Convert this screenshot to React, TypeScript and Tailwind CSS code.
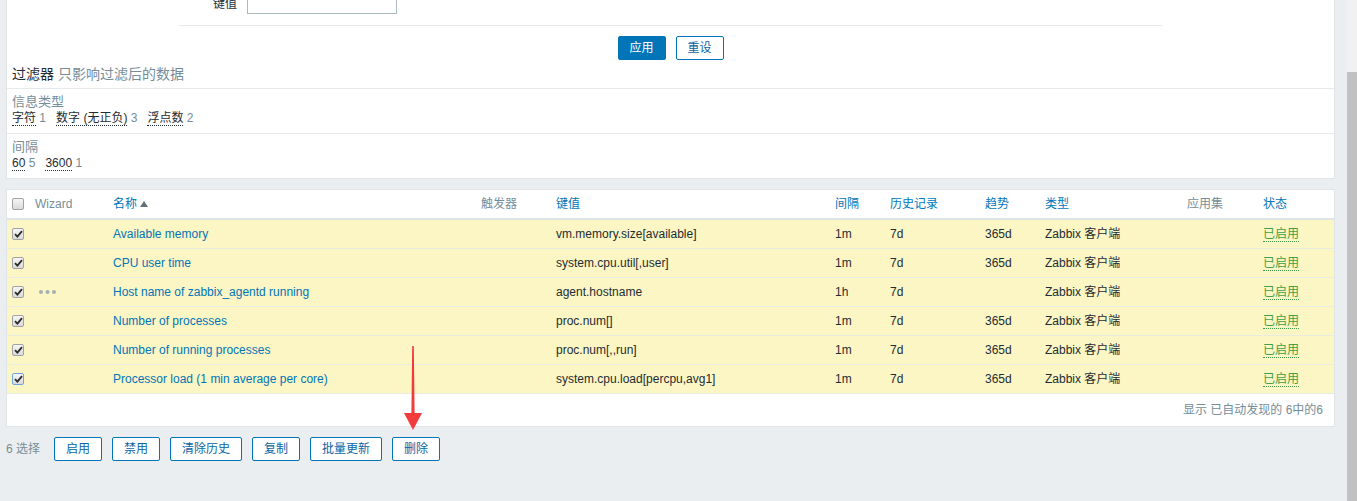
import React from "react";

type Item = {
    name: string;
    key: string;
    interval: string;
    history: string;
    trends: string;
    wizard?: boolean;
    focus?: boolean;
};

const items: Item[] = [
    { name: "Available memory", key: "vm.memory.size[available]", interval: "1m", history: "7d", trends: "365d" },
    { name: "CPU user time", key: "system.cpu.util[,user]", interval: "1m", history: "7d", trends: "365d" },
    { name: "Host name of zabbix_agentd running", key: "agent.hostname", interval: "1h", history: "7d", trends: "", wizard: true },
    { name: "Number of processes", key: "proc.num[]", interval: "1m", history: "7d", trends: "365d" },
    { name: "Number of running processes", key: "proc.num[,,run]", interval: "1m", history: "7d", trends: "365d" },
    { name: "Processor load (1 min average per core)", key: "system.cpu.load[percpu,avg1]", interval: "1m", history: "7d", trends: "365d", focus: true },
];

const cols = "grid grid-cols-[28px_78px_368px_75px_279px_55px_95px_60px_142px_76px_71px] items-center";

function Checkbox({ checked, focus }: { checked?: boolean; focus?: boolean }) {
    return (
        <span
            className={
                "flex h-[12px] w-[12px] items-center justify-center rounded-[2px] border bg-linear-to-b from-[#f6f6f6] to-[#dadada] " +
                (focus ? "border-[#6fa4de]" : "border-[#a2a2a2]")
            }
        >
            {checked && (
                <svg width="9" height="8" viewBox="0 0 9 8">
                    <path d="M1 4.2 L3.4 6.6 L8 1.2" fill="none" stroke="#2b2b2b" strokeWidth="1.8" />
                </svg>
            )}
        </span>
    );
}

function Filter({ label, count }: { label: string; count: string }) {
    return (
        <span className="mr-[10px]">
            <span className="border-b border-dotted border-[#1f2c33]">{label}</span>
            <span className="text-[#768d99]"> {count}</span>
        </span>
    );
}

function AltButton({ children }: { children: React.ReactNode }) {
    return (
        <button className="h-[24px] rounded-[2px] border border-[#0275b8] bg-white px-[11px] text-[12px] leading-none text-[#0b65a3]">
            {children}
        </button>
    );
}

export default function App() {
    return (
        <div className="flex h-[501px] w-[1357px] overflow-hidden bg-[#ebeef0] font-['Liberation_Sans','Noto_Sans_CJK_SC',sans-serif] text-[12px] text-[#1f2c33]">
            <div className="relative flex-1 pl-[6px] pr-[12px]">
                {/* filter panel */}
                <div className="border-x border-b border-[#dfe4e7] bg-white">
                    <div className="ml-[172px] flex h-[26px] w-[983px] items-end border-b border-[#e6e9eb] pb-[11px]">
                        <div className="flex items-center">
                            <span className="mt-[4px] w-[58px] text-right">键值</span>
                            <span className="ml-[10px] block h-[24px] w-[150px] border border-[#acbbc2] bg-white"></span>
                        </div>
                    </div>
                    <div className="flex justify-center gap-[10px] pt-[10px]">
                        <button className="h-[24px] w-[48px] rounded-[2px] border border-[#0275b8] bg-[#0275b8] text-[12px] leading-none text-white">
                            应用
                        </button>
                        <button className="h-[24px] w-[48px] rounded-[2px] border border-[#0275b8] bg-white text-[12px] leading-none text-[#0b65a3]">
                            重设
                        </button>
                    </div>
                    <div className="flex h-[29px] items-center border-b border-[#e6e9eb] pl-[5px] text-[14px]">
                        <span>过滤器</span>
                        <span className="ml-[4px] text-[#768d99]">只影响过滤后的数据</span>
                    </div>
                    <div className="h-[45px] border-b border-[#e6e9eb] pl-[5px] pt-[5px] leading-[16px]">
                        <div className="text-[13px] text-[#768d99]">信息类型</div>
                        <div>
                            <Filter label="字符" count="1" />
                            <Filter label="数字 (无正负)" count="3" />
                            <Filter label="浮点数" count="2" />
                        </div>
                    </div>
                    <div className="h-[44px] pl-[5px] pt-[5px] leading-[16px]">
                        <div className="text-[13px] text-[#768d99]">间隔</div>
                        <div>
                            <Filter label="60" count="5" />
                            <Filter label="3600" count="1" />
                        </div>
                    </div>
                </div>

                {/* items table */}
                <div className="mt-[10px] border border-[#dfe4e7] bg-white">
                    <div className={cols + " h-[30px] border-b-2 border-[#dfe4e7] text-[#0275b8]"}>
                        <div className="pl-[5px]">
                            <Checkbox />
                        </div>
                        <div className="text-[#768d99]">Wizard</div>
                        <div className="flex items-center">
                            名称
                            <svg className="ml-[3px]" width="8" height="6" viewBox="0 0 8 6">
                                <path d="M0 6 L4 0 L8 6 Z" fill="#5f7079" />
                            </svg>
                        </div>
                        <div className="text-[#768d99]">触发器</div>
                        <div>键值</div>
                        <div>间隔</div>
                        <div>历史记录</div>
                        <div>趋势</div>
                        <div>类型</div>
                        <div className="text-[#768d99]">应用集</div>
                        <div>状态</div>
                    </div>
                    {items.map((it) => (
                        <div key={it.name} className={cols + " h-[29px] border-b border-[#e8ebe0] bg-[#fbf6c4]"}>
                            <div className="pl-[5px]">
                                <Checkbox checked focus={it.focus} />
                            </div>
                            <div className="pl-[4px]">
                                {it.wizard && (
                                    <svg width="17" height="4" viewBox="0 0 17 4">
                                        <circle cx="2" cy="2" r="2" fill="#a5b0b6" />
                                        <circle cx="8.5" cy="2" r="2" fill="#a5b0b6" />
                                        <circle cx="15" cy="2" r="2" fill="#a5b0b6" />
                                    </svg>
                                )}
                            </div>
                            <div className="text-[#0275b8]">{it.name}</div>
                            <div></div>
                            <div>{it.key}</div>
                            <div>{it.interval}</div>
                            <div>{it.history}</div>
                            <div>{it.trends}</div>
                            <div>Zabbix 客户端</div>
                            <div></div>
                            <div>
                                <span className="border-b border-dotted border-[#429e47] text-[#429e47]">已启用</span>
                            </div>
                        </div>
                    ))}
                    <div className="flex h-[32px] items-center justify-end pr-[11px] text-[#768d99]">
                        显示 已自动发现的 6中的6
                    </div>
                </div>

                {/* action bar */}
                <div className="mt-[10px] flex items-center gap-[10px]">
                    <span className="mr-[4px] text-[#768d99]">6 选择</span>
                    <AltButton>启用</AltButton>
                    <AltButton>禁用</AltButton>
                    <AltButton>清除历史</AltButton>
                    <AltButton>复制</AltButton>
                    <AltButton>批量更新</AltButton>
                    <AltButton>删除</AltButton>
                </div>

                {/* red annotation arrow */}
                <svg className="absolute left-[403px] top-[344px]" width="20" height="88" viewBox="0 0 20 88">
                    <path d="M9.2 2 L10.8 2 L11.6 70 L8.4 70 Z" fill="#f23b3b" />
                    <path d="M1 69 L19 69 L10 86 Z" fill="#f23b3b" />
                </svg>
            </div>

            {/* scrollbar */}
            <div className="flex w-[10px] flex-col">
                <div className="h-[72px] bg-[#f1f1f1]"></div>
                <div className="flex-1 bg-[#c1c1c1]"></div>
            </div>
        </div>
    );
}
